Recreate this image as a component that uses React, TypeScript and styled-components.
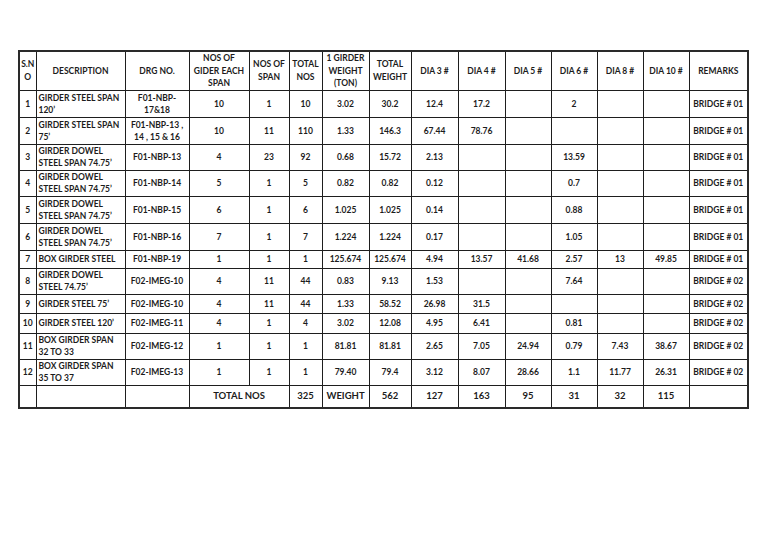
import styled, { createGlobalStyle } from "styled-components";

const Global = createGlobalStyle`
  html, body {
    margin: 0;
    padding: 0;
    background: #fff;
  }
`;

const Page = styled.div`
  width: 768px;
  height: 543px;
  padding: 50px 0 0 18px;
  box-sizing: border-box;
  background: #fff;
`;

const Table = styled.table`
  table-layout: fixed;
  border-collapse: collapse;
  width: 729px;
  border: 2px solid #2a2a2a;
  font-family: Lato, "Liberation Sans", sans-serif;
  font-weight: 700;
  color: #1c1c1c;
`;

const Row = styled.tr<{ $h: number }>`
  height: ${(p) => p.$h}px;
`;

const Cell = styled.td<{ $left?: boolean; $size?: number }>`
  border: 1px solid #1e1e1e;
  padding: ${(p) => (p.$left ? "0 0 0 2px" : "0")};
  text-align: ${(p) => (p.$left ? "left" : "center")};
  vertical-align: middle;
  font-size: ${(p) => p.$size ?? 8.5}px;
  line-height: 12px;
  white-space: pre-line;
  overflow: hidden;
`;

const Head = styled.th`
  border: 1px solid #1e1e1e;
  padding: 0;
  text-align: center;
  vertical-align: middle;
  font-size: 8.5px;
  font-weight: 700;
  line-height: 12.5px;
  white-space: pre-line;
`;

const widths = [17, 89, 64, 60, 40, 33, 47, 42, 47, 47, 46, 46, 46, 46, 59];

const headers = [
  "S.N\nO",
  "DESCRIPTION",
  "DRG NO.",
  "NOS OF\nGIDER EACH\nSPAN",
  "NOS OF\nSPAN",
  "TOTAL\nNOS",
  "1 GIRDER\nWEIGHT\n(TON)",
  "TOTAL\nWEIGHT",
  "DIA 3 #",
  "DIA 4 #",
  "DIA 5 #",
  "DIA 6 #",
  "DIA 8 #",
  "DIA 10 #",
  "REMARKS",
];

type Item = { h: number; cells: string[] };

const rows: Item[] = [
  { h: 27, cells: ["1", "GIRDER STEEL SPAN\n120’", "F01-NBP-\n17&18", "10", "1", "10", "3.02", "30.2", "12.4", "17.2", "", "2", "", "", "BRIDGE # 01"] },
  { h: 27, cells: ["2", "GIRDER STEEL SPAN\n75’", "F01-NBP-13 ,\n14 , 15 & 16", "10", "11", "110", "1.33", "146.3", "67.44", "78.76", "", "", "", "", "BRIDGE # 01"] },
  { h: 26, cells: ["3", "GIRDER DOWEL\nSTEEL SPAN 74.75’", "F01-NBP-13", "4", "23", "92", "0.68", "15.72", "2.13", "", "", "13.59", "", "", "BRIDGE # 01"] },
  { h: 26, cells: ["4", "GIRDER DOWEL\nSTEEL SPAN 74.75’", "F01-NBP-14", "5", "1", "5", "0.82", "0.82", "0.12", "", "", "0.7", "", "", "BRIDGE # 01"] },
  { h: 27, cells: ["5", "GIRDER DOWEL\nSTEEL SPAN 74.75’", "F01-NBP-15", "6", "1", "6", "1.025", "1.025", "0.14", "", "", "0.88", "", "", "BRIDGE # 01"] },
  { h: 27, cells: ["6", "GIRDER DOWEL\nSTEEL SPAN 74.75’", "F01-NBP-16", "7", "1", "7", "1.224", "1.224", "0.17", "", "", "1.05", "", "", "BRIDGE # 01"] },
  { h: 18, cells: ["7", "BOX GIRDER STEEL", "F01-NBP-19", "1", "1", "1", "125.674", "125.674", "4.94", "13.57", "41.68", "2.57", "13", "49.85", "BRIDGE # 01"] },
  { h: 26, cells: ["8", "GIRDER DOWEL\nSTEEL 74.75’", "F02-IMEG-10", "4", "11", "44", "0.83", "9.13", "1.53", "", "", "7.64", "", "", "BRIDGE # 02"] },
  { h: 19, cells: ["9", "GIRDER STEEL 75’", "F02-IMEG-10", "4", "11", "44", "1.33", "58.52", "26.98", "31.5", "", "", "", "", "BRIDGE # 02"] },
  { h: 20, cells: ["10", "GIRDER STEEL 120’", "F02-IMEG-11", "4", "1", "4", "3.02", "12.08", "4.95", "6.41", "", "0.81", "", "", "BRIDGE # 02"] },
  { h: 26, cells: ["11", "BOX GIRDER SPAN\n32 TO 33", "F02-IMEG-12", "1", "1", "1", "81.81", "81.81", "2.65", "7.05", "24.94", "0.79", "7.43", "38.67", "BRIDGE # 02"] },
  { h: 26, cells: ["12", "BOX GIRDER SPAN\n35 TO 37", "F02-IMEG-13", "1", "1", "1", "79.40", "79.4", "3.12", "8.07", "28.66", "1.1", "11.77", "26.31", "BRIDGE # 02"] },
];

const totals = ["325", "WEIGHT", "562", "127", "163", "95", "31", "32", "115", ""];

export default function App() {
  return (
    <>
      <Global />
      <Page>
        <Table>
          <colgroup>
            {widths.map((w, i) => (
              <col key={i} style={{ width: w }} />
            ))}
          </colgroup>
          <thead>
            <Row $h={39}>
              {headers.map((h) => (
                <Head key={h}>{h}</Head>
              ))}
            </Row>
          </thead>
          <tbody>
            {rows.map((r) => (
              <Row key={r.cells[0]} $h={r.h}>
                {r.cells.map((c, i) => (
                  <Cell key={i} $left={i === 1}>
                    {c}
                  </Cell>
                ))}
              </Row>
            ))}
            <Row $h={23}>
              <Cell />
              <Cell />
              <Cell />
              <Cell colSpan={2} $size={9.5}>
                TOTAL NOS
              </Cell>
              {totals.map((t, i) => (
                <Cell key={i} $size={9.5}>
                  {t}
                </Cell>
              ))}
            </Row>
          </tbody>
        </Table>
      </Page>
    </>
  );
}
